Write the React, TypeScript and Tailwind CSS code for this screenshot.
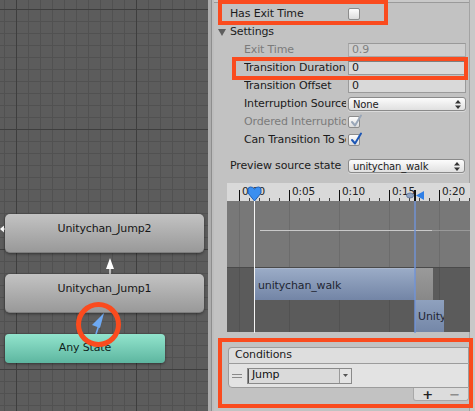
import React from "react";

const Check = ({ muted = false }: { muted?: boolean }) => (
  <div className="relative h-[12px] w-[12px] shrink-0 rounded-[2px] border border-[#8c8c8c] bg-linear-to-b from-[#fdfdfd] to-[#dcdcdc]">
    <svg className="absolute -top-[3px] left-[1px]" width="13" height="14" viewBox="0 0 13 14">
      <path
        d="M2 8 L5 11.5 L11 1.5"
        fill="none"
        stroke={muted ? "#9aa7b8" : "#1d57b5"}
        strokeWidth="2"
        strokeLinecap="round"
        strokeLinejoin="round"
      />
    </svg>
  </div>
);

const Arrows = () => (
  <svg width="6" height="9" viewBox="0 0 6 9">
    <polygon points="0,3.5 3,0 6,3.5" fill="#333" />
    <polygon points="0,5.5 3,9 6,5.5" fill="#333" />
  </svg>
);

const Row = ({
  label,
  indent = false,
  muted = false,
  children,
}: {
  label: string;
  indent?: boolean;
  muted?: boolean;
  children?: React.ReactNode;
}) => (
  <div className="flex h-[18px] items-center">
    <div className={indent ? "w-[134px] shrink-0 pl-[30px] pr-[2px]" : "w-[134px] shrink-0 pl-[16px] pr-[2px]"}>
      <div className={muted ? "overflow-hidden whitespace-nowrap text-[#7b7b7b]" : "overflow-hidden whitespace-nowrap"}>
        {label}
      </div>
    </div>
    {children}
  </div>
);

const Field = ({ value, muted = false }: { value: string; muted?: boolean }) => (
  <div
    className={
      muted
        ? "flex h-[14px] w-[118px] items-center border border-[#a8a8a8] border-t-[#999] bg-[#cecece] pl-[3px] text-[#808080]"
        : "flex h-[14px] w-[118px] items-center border border-[#9a9a9a] border-t-[#7f7f7f] bg-[#d9d9d9] pl-[3px]"
    }
  >
    {value}
  </div>
);

const Dropdown = ({ value, w = "w-[118px]" }: { value: string; w?: string }) => (
  <div
    className={`flex h-[14px] ${w} items-center justify-between rounded-[3px] border border-[#8a8a8a] bg-linear-to-b from-[#fcfcfc] to-[#e0e0e0] pl-[4px] pr-[4px] shadow-[0_1px_0_rgba(255,255,255,0.4)]`}
  >
    <span className="text-[10px]">{value}</span>
    <Arrows />
  </div>
);

const ticks = Array.from({ length: 24 }, (_, i) => i);
const labels = ["0:00", "0:05", "0:10", "0:15", "0:20"];

const Timeline = () => (
  <div className="relative ml-[13px] h-[150px] w-[243px] overflow-hidden">
    {/* ruler */}
    <div className="relative h-[18px] bg-[#d9d9d9]">
      {ticks.map((i) => (
        <div
          key={i}
          className={i % 5 === 0 ? "absolute bottom-0 h-[11px] w-px bg-[#111]" : "absolute bottom-0 h-[3px] w-px bg-[#444]"}
          style={{ left: 12 + i * 10 }}
        />
      ))}
      {labels.map((l, i) => (
        <div key={l} className="absolute top-[2px] text-[10.5px] leading-[12px] text-[#222]" style={{ left: 15 + i * 50 }}>
          {l}
        </div>
      ))}
    </div>
    {/* upper track */}
    <div className="relative h-[67px] border-b border-[#4a4a4a] bg-[#787878]">
      {labels.map((l, i) => (
        <div key={l} className="absolute top-0 h-full w-px bg-[#6c6c6c]" style={{ left: 12 + i * 50 }} />
      ))}
      <div className="absolute left-[33px] top-[29px] h-px w-[172px] bg-[#c9c9c9]" />
      <div className="absolute left-[205px] top-[29px] h-px w-[40px] bg-[#999]" />
    </div>
    {/* lower track */}
    <div className="relative h-[64px] bg-[#5b5b5b]">
      {labels.map((l, i) => (
        <div key={l} className="absolute top-0 h-full w-px bg-[#525252]" style={{ left: 12 + i * 50 }} />
      ))}
      <div className="absolute left-[27px] top-0 flex h-[32px] w-[161px] items-center border-t border-[#a9b6cc] bg-linear-to-b from-[#9aabc6] to-[#7385a6] pl-[4px] pt-[3px] text-[11px] text-[#1f2632]">
        unitychan_walk
      </div>
      <div className="absolute left-[188px] top-0 h-[32px] w-[18px] bg-linear-to-b from-[#9a9a9a] to-[#888]" />
      <div className="absolute left-[188px] top-[32px] flex h-[32px] w-[29px] items-center overflow-hidden whitespace-nowrap bg-linear-to-b from-[#8fa1be] to-[#7487a8] pl-[3px] pt-[3px] text-[11px] text-[#1f2632]">
        Unity
      </div>
    </div>
    {/* playhead */}
    <div className="absolute left-[27px] top-[8px] h-[142px] w-px bg-[#f4f4f4]" />
    <svg className="absolute left-[20px] top-[3px]" width="15" height="16" viewBox="0 0 15 16">
      <path
        d="M1 3.5 Q1 1 3.5 1 Q6 1 7.5 3 Q9 1 11.5 1 Q14 1 14 3.5 L14 7 L7.5 15 L1 7 Z"
        fill="#3b8ff0"
        stroke="#1d5fb8"
        strokeWidth="1"
      />
    </svg>
    {/* transition marker */}
    <div className="absolute left-[187px] top-[18px] h-[132px] w-[2px] bg-[#6f93d8]/70" />
    <div className="absolute left-[187px] top-[7px] h-[11px] w-[2px] bg-[#111]" />
    <svg className="absolute left-[179px] top-[9px]" width="8" height="7" viewBox="0 0 8 7">
      <ellipse cx="4" cy="3.5" rx="3.5" ry="2.5" fill="#8ea2c2" stroke="#5a6f92" strokeWidth="0.8" />
    </svg>
    <svg className="absolute left-[189px] top-[8px]" width="8" height="9" viewBox="0 0 8 9">
      <polygon points="8,0 8,9 0,4.5" fill="#2f7fe6" />
    </svg>
  </div>
);

export default function App() {
  return (
    <div className="relative flex h-[411px] w-[475px] overflow-hidden font-['DejaVu_Sans',sans-serif] tracking-[-0.15px]">
      {/* graph canvas */}
      <div className="relative h-full w-[208px] shrink-0 bg-[#5c5c5c] bg-[linear-gradient(to_right,#3e3e3e_1px,transparent_1px),linear-gradient(to_bottom,#3e3e3e_1px,transparent_1px),linear-gradient(to_right,#515151_1px,transparent_1px),linear-gradient(to_bottom,#515151_1px,transparent_1px)] bg-[size:120px_120px,120px_120px,12px_12px,12px_12px] bg-[position:16px_9px,16px_9px,4px_9px,4px_9px]">
        <svg className="absolute left-0 top-[224px]" width="6" height="10" viewBox="0 0 6 10">
          <polygon points="0,5 4,1.5 4,8.5" fill="#fff" />
          <rect x="4" y="4.5" width="2" height="1" fill="#fff" />
        </svg>
        <div className="absolute left-[5px] top-[214px] flex h-[39px] w-[199px] justify-center rounded-[5px] border-b border-[#7d7d7d] bg-linear-to-b from-[#c3c3c3] to-[#999999] pt-[7px] text-[11px] text-[#161616] shadow-[0_1px_3px_rgba(0,0,0,0.45)]">
          Unitychan_Jump2
        </div>
        <svg className="absolute left-[105px] top-[253px]" width="10" height="21" viewBox="0 0 10 21">
          <line x1="5" y1="8" x2="5" y2="21" stroke="#fff" strokeWidth="1.2" />
          <polygon points="5,5 1,16 9,16" fill="#fff" />
        </svg>
        <div className="absolute left-[5px] top-[274px] flex h-[39px] w-[199px] justify-center rounded-[5px] border-b border-[#7d7d7d] bg-linear-to-b from-[#c3c3c3] to-[#999999] pt-[7px] text-[11px] text-[#161616] shadow-[0_1px_3px_rgba(0,0,0,0.45)]">
          Unitychan_Jump1
        </div>
        <div className="absolute left-[5px] top-[334px] flex h-[29px] w-[160px] items-center justify-center rounded-[4px] bg-linear-to-b from-[#92e4cd] to-[#5db6a0] text-[11px] text-[#0f1f1b] shadow-[0_1px_3px_rgba(0,0,0,0.45)]">
          Any State
        </div>
        <svg className="absolute left-[88px] top-[310px]" width="20" height="26" viewBox="0 0 20 26">
          <line x1="8" y1="24" x2="11" y2="15" stroke="#6ea9f2" strokeWidth="1.6" />
          <polygon points="16,3 4,15 12,18" fill="#6ea9f2" />
        </svg>
        <div className="absolute left-[76px] top-[302px] h-[45px] w-[45px] rounded-full border-[5px] border-[#fa4b1e]" />
      </div>

      {/* divider */}
      <div className="h-full w-[3px] bg-[#adadad]" />
      <div className="h-full w-px bg-[#8e8e8e]" />
      <div className="h-full w-[2px] bg-[#bdbdbd]" />

      {/* inspector */}
      <div className="relative flex h-full flex-1 bg-[#c2c2c2] text-[11px] text-[#1b1b1b]">
        <div className="w-[256px] shrink-0 border-r border-[#a3a3a3]">
          <div className="h-[3px] border-b border-[#9a9a9a] bg-[#c9c9c9]" />
          <div className="mt-px flex h-[20px] items-center">
            <div className="w-[134px] shrink-0 pl-[16px]">Has Exit Time</div>
            <div className="h-[12px] w-[12px] rounded-[2px] border border-[#8c8c8c] bg-linear-to-b from-[#fdfdfd] to-[#dcdcdc]" />
          </div>
          <div className="flex h-[17px] items-center">
            <svg className="ml-[4px] mr-[4px]" width="8" height="7" viewBox="0 0 8 7">
              <polygon points="0,0 8,0 4,7" fill="#5e5e5e" />
            </svg>
            <span>Settings</span>
          </div>
          <Row label="Exit Time" indent muted>
            <Field value="0.9" muted />
          </Row>
          <Row label="Transition Duration" indent>
            <Field value="0" />
          </Row>
          <Row label="Transition Offset" indent>
            <Field value="0" />
          </Row>
          <Row label="Interruption Source" indent>
            <Dropdown value="None" />
          </Row>
          <Row label="Ordered Interruption" indent muted>
            <Check muted />
          </Row>
          <Row label="Can Transition To Self" indent>
            <Check />
          </Row>
          <div className="mt-[8px] flex h-[18px] items-center">
            <div className="w-[134px] shrink-0 pl-[16px]">Preview source state</div>
            <Dropdown value="unitychan_walk" w="w-[117px]" />
          </div>
          <div className="mt-[8px]">
            <Timeline />
          </div>

          {/* conditions */}
          <div className="ml-[14px] mt-[14px]">
            <div className="flex h-[16px] items-center rounded-tl-[4px] border border-b-0 border-[#9c9c9c] bg-[#dedede] pl-[6px] text-[11px]">
              Conditions
            </div>
            <div className="flex h-[25px] items-center rounded-bl-[4px] border border-[#9c9c9c] bg-[#e3e3e3] pl-[3px]">
              <div className="mr-[5px] flex w-[10px] flex-col gap-[2px]">
                <div className="h-px bg-[#8a8a8a]" />
                <div className="h-px bg-[#8a8a8a]" />
              </div>
              <div className="flex h-[16px] w-[105px] items-stretch border border-[#8a8a8a] bg-[#dadada]">
                <div className="flex flex-1 items-center border-l border-[#555] pl-[3px] text-[11px] text-[#111]">Jump</div>
                <div className="flex w-[12px] items-center justify-center border-l border-[#9a9a9a] bg-[#e4e4e4]">
                  <svg width="5" height="3" viewBox="0 0 5 3">
                    <polygon points="0,0 5,0 2.5,3" fill="#555" />
                  </svg>
                </div>
              </div>
            </div>
            <div className="ml-[185px] flex h-[13px] items-center justify-around rounded-b-[3px] border border-t-0 border-[#a8a8a8] bg-[#dcdcdc] text-[13px] font-bold leading-none">
              <span className="text-[#222]">+</span>
              <span className="text-[#8c8c8c]">−</span>
            </div>
          </div>
        </div>
        <div className="flex-1 bg-[#c8c8c8]" />
      </div>

      {/* annotations */}
      <div className="absolute left-[218px] top-0 h-[25px] w-[170px] border-4 border-[#fa4b1e]" />
      <div className="absolute left-[232px] top-[57px] h-[23px] w-[236px] border-4 border-[#fa4b1e]" />
      <div className="absolute left-[218px] top-[338px] h-[70px] w-[255px] border-4 border-[#fa4b1e]" />
    </div>
  );
}
